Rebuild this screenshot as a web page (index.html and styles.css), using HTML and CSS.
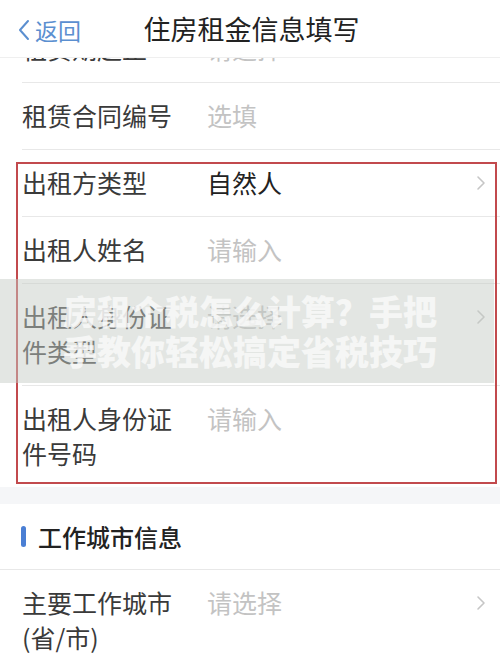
FILE: index.html
```html
<!DOCTYPE html>
<html lang="zh-CN">
<head>
<meta charset="utf-8">
<title>住房租金信息填写</title>
<link rel="stylesheet" href="styles.css">
</head>
<body>
<div class="page">
  <header class="nav">
    <div class="back">
      <svg class="back-icon" width="14" height="22" viewBox="0 0 14 22"><path d="M11 2 L3 11 L11 20" fill="none" stroke="#5b8fd0" stroke-width="2" stroke-linecap="round" stroke-linejoin="round"/></svg>
      <span>返回</span>
    </div>
    <div class="title">住房租金信息填写</div>
  </header>

  <div class="list">
    <div class="cut">
      <div class="row">
        <div class="label">租赁期起止</div>
        <div class="value placeholder">请选择</div>
      </div>
    </div>
    <div class="row">
      <div class="label">租赁合同编号</div>
      <div class="value placeholder">选填</div>
    </div>
    <div class="row">
      <div class="label">出租方类型</div>
      <div class="value">自然人</div>
      <svg class="chev" width="10" height="16" viewBox="0 0 10 16"><path d="M2 2 L8 8 L2 14" fill="none" stroke="#c6c6c6" stroke-width="1.6" stroke-linecap="round" stroke-linejoin="round"/></svg>
    </div>
    <div class="row">
      <div class="label">出租人姓名</div>
      <div class="value placeholder">请输入</div>
    </div>
    <div class="row">
      <div class="label">出租人身份证件类型</div>
      <div class="value placeholder">请选择</div>
      <svg class="chev" width="10" height="16" viewBox="0 0 10 16"><path d="M2 2 L8 8 L2 14" fill="none" stroke="#c6c6c6" stroke-width="1.6" stroke-linecap="round" stroke-linejoin="round"/></svg>
    </div>
    <div class="row last">
      <div class="label">出租人身份证件号码</div>
      <div class="value placeholder">请输入</div>
    </div>
  </div>

  <div class="gap"></div>

  <div class="list">
    <div class="section">
      <span class="bar"></span>
      <span class="section-title">工作城市信息</span>
    </div>
    <div class="row">
      <div class="label">主要工作城市(省/市)</div>
      <div class="value placeholder">请选择</div>
      <svg class="chev" width="10" height="16" viewBox="0 0 10 16"><path d="M2 2 L8 8 L2 14" fill="none" stroke="#c6c6c6" stroke-width="1.6" stroke-linecap="round" stroke-linejoin="round"/></svg>
    </div>
  </div>

  <div class="highlight"></div>
  <div class="banner">
    <div class="banner-text">房租个税怎么计算？手把<br>手教你轻松搞定省税技巧</div>
  </div>
</div>
</body>
</html>
```

FILE: styles.css
```css
* { box-sizing: border-box; }
html, body {
  margin: 0;
  padding: 0;
  background: #ffffff;
}
body {
  font-family: "Noto Sans CJK SC", "Noto Sans", sans-serif;
  color: #333333;
}
.page {
  position: relative;
  width: 500px;
  height: 663px;
  overflow: hidden;
  background: #ffffff;
}
.nav {
  position: relative;
  height: 58px;
  border-bottom: 1px solid #efefef;
  display: flex;
  align-items: center;
  justify-content: center;
  background: #ffffff;
  z-index: 2;
}
.back {
  position: absolute;
  left: 17px;
  top: 17px;
  display: flex;
  align-items: center;
  gap: 4px;
  color: #5b8fd0;
  font-size: 23px;
  line-height: 26px;
}
.back-icon { display: block; }
.title {
  font-size: 27px;
  color: #222222;
  line-height: 32px;
  margin-top: 1px;
  padding-left: 3px;
}
.list {
  background: #ffffff;
}
.cut {
  height: 25px;
  overflow: hidden;
}
.cut .row {
  margin-top: -42px;
}
.row {
  display: flex;
  align-items: flex-start;
  margin-left: 22px;
  padding: 15px 14px 16px 0;
  border-bottom: 1px solid #e8e8e8;
}
.row.last { border-bottom: none; }
.label {
  flex: 0 0 185px;
  padding-right: 28px;
  font-size: 25px;
  line-height: 35px;
  color: #3a3a3a;
}
.value {
  flex: 1;
  font-size: 25px;
  line-height: 35px;
  color: #222222;
}
.value.placeholder { color: #c3c3c3; }
.chev {
  display: block;
  margin-top: 10px;
}
.gap {
  height: 17px;
  background: #f5f6f8;
}
.section {
  height: 66px;
  display: flex;
  align-items: center;
  padding-left: 21px;
  border-bottom: 1px solid #e8e8e8;
}
.bar {
  width: 5px;
  height: 21px;
  border-radius: 3px;
  background: #4a7fd4;
  margin-right: 12px;
}
.section-title {
  font-size: 24px;
  font-weight: 500;
  color: #222222;
}
.highlight {
  position: absolute;
  left: 16px;
  top: 162px;
  width: 481px;
  height: 322px;
  border: 2px solid #c24a4d;
  z-index: 3;
}
.banner {
  position: absolute;
  left: 0;
  top: 279px;
  width: 494px;
  height: 104px;
  background: rgba(196, 202, 196, 0.48);
  display: flex;
  align-items: center;
  justify-content: center;
  z-index: 4;
}
.banner-text {
  font-size: 34px;
  font-weight: 900;
  line-height: 40px;
  text-align: center;
  color: rgba(250, 250, 250, 0.82);
  padding-left: 6px;
}
```
